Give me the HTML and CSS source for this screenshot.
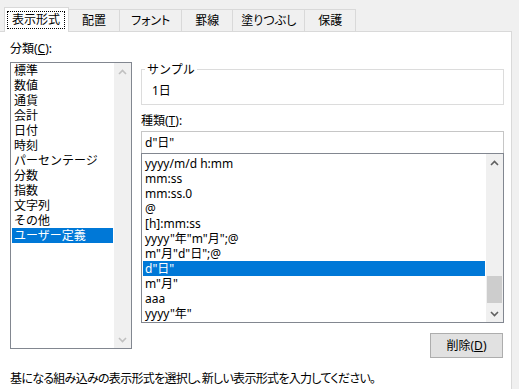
FILE: index.html
```html
<!DOCTYPE html>
<html lang="ja">
    <head>
        <meta charset="UTF-8">
        <title>セルの書式設定</title>
        <link rel="stylesheet" href="styles.css">
    </head>
    <body>
        <div class="tabs">
            <div class="tab active"><span class="focus">表示形式</span></div>
            <div class="tab">配置</div>
            <div class="tab tab-kana">フォント</div>
            <div class="tab">罫線</div>
            <div class="tab tab-long">塗りつぶし</div>
            <div class="tab">保護</div>
        </div>

        <div class="panel">
            <div class="col-left">
                <div class="label">分類(<u>C</u>):</div>
                <div class="listbox cat-list">
                    <ul class="items">
                        <li>標準</li>
                        <li>数値</li>
                        <li>通貨</li>
                        <li>会計</li>
                        <li>日付</li>
                        <li>時刻</li>
                        <li>パーセンテージ</li>
                        <li>分数</li>
                        <li>指数</li>
                        <li>文字列</li>
                        <li>その他</li>
                        <li class="selected">ユーザー定義</li>
                    </ul>
                    <div class="scrollbar disabled">
                        <div class="arrow"><svg width="9" height="6" viewBox="0 0 9 6"><polyline points="1,5 4.5,1.5 8,5" /></svg></div>
                        <div class="track"></div>
                        <div class="arrow"><svg width="9" height="6" viewBox="0 0 9 6"><polyline points="1,1 4.5,4.5 8,1" /></svg></div>
                    </div>
                </div>
            </div>

            <div class="col-right">
                <fieldset class="sample">
                    <legend>サンプル</legend>
                    <div class="sample-value">1日</div>
                </fieldset>
                <div class="label type-label">種類(<u>T</u>):</div>
                <div class="textbox">d"日"</div>
                <div class="listbox type-list">
                    <ul class="items">
                        <li>yyyy/m/d h:mm</li>
                        <li>mm:ss</li>
                        <li>mm:ss.0</li>
                        <li>@</li>
                        <li>[h]:mm:ss</li>
                        <li>yyyy"年"m"月";@</li>
                        <li>m"月"d"日";@</li>
                        <li class="selected">d"日"</li>
                        <li>m"月"</li>
                        <li>aaa</li>
                        <li>yyyy"年"</li>
                    </ul>
                    <div class="scrollbar">
                        <div class="arrow"><svg width="9" height="6" viewBox="0 0 9 6"><polyline points="1,5 4.5,1.5 8,5" /></svg></div>
                        <div class="track"><div class="thumb"></div></div>
                        <div class="arrow"><svg width="9" height="6" viewBox="0 0 9 6"><polyline points="1,1 4.5,4.5 8,1" /></svg></div>
                    </div>
                </div>
                <div class="btn-row">
                    <button class="btn">削除(<u>D</u>)</button>
                </div>
            </div>

            <p class="hint">基になる組み込みの表示形式を選択し、新しい表示形式を入力してください。</p>
        </div>
    </body>
</html>
```

FILE: styles.css
```css
body {
    margin: 0;
    background-color: #f0f0f0;
    font-family: "Noto Sans", "Noto Sans CJK JP", sans-serif;
    font-size: 12px;
    line-height: 15px;
    color: #000;
    overflow: hidden;
}

/* tab strip */
.tabs {
    display: flex;
    align-items: flex-end;
    height: 31px;
    padding-left: 4px;
}

.tab {
    box-sizing: border-box;
    height: 22px;
    padding: 0 13px;
    margin-left: -1px;
    border: 1px solid #d9d9d9;
    border-bottom: none;
    background-color: #f0f0f0;
    display: flex;
    align-items: center;
    justify-content: center;
    font-feature-settings: "palt";
}

.tab.tab-kana {
    padding: 0 11px;
}

.tab.tab-long {
    padding: 0 8px;
}

.tab.active {
    margin-left: 0;
    height: 25px;
    margin-bottom: -1px;
    padding: 0 3px 0 2px;
    background-color: #fff;
    position: relative;
    z-index: 1;
}

.focus {
    border: 1px dotted #000;
    padding: 1px 4px;
    line-height: 14px;
}

/* main page */
.panel {
    box-sizing: border-box;
    width: 512px;
    height: calc(100vh - 31px);
    overflow: hidden;
    background-color: #fff;
    border: 1px solid #d9d9d9;
    border-left: none;
    border-bottom: none;
    padding: 9px 0 0 10px;
    display: grid;
    grid-template-columns: 122px 363px;
    column-gap: 9px;
    align-content: start;
}

.label u,
.btn u {
    text-underline-offset: 1px;
}

.listbox {
    box-sizing: border-box;
    border: 1px solid #828790;
    display: flex;
    background-color: #fff;
}

.items {
    list-style: none;
    margin: 0;
    padding: 0 1px;
    flex: 1;
    overflow: hidden;
}

.items li {
    padding: 0 2px;
    height: 15px;
    white-space: nowrap;
}

.items li.selected {
    background-color: #0078d7;
    color: #fff;
}

.cat-list {
    margin-top: 6px;
    height: 287px;
}

.scrollbar {
    width: 17px;
    background-color: #f0f0f0;
    display: flex;
    flex-direction: column;
}

.arrow {
    height: 17px;
    display: flex;
    align-items: center;
    justify-content: center;
}

.arrow polyline {
    fill: none;
    stroke: #606060;
    stroke-width: 1.6;
}

.scrollbar.disabled .arrow polyline {
    stroke: #c0c0c0;
}

.track {
    flex: 1;
    position: relative;
}

.thumb {
    position: absolute;
    left: 1px;
    right: 1px;
    top: 105px;
    height: 27px;
    background-color: #cdcdcd;
}

/* right column */
.sample {
    margin: 21px 0 0;
    padding: 0 0 5px 10px;
    border: 1px solid #dcdcdc;
    height: 43px;
    box-sizing: border-box;
}

.sample legend {
    padding: 0 2px;
    margin-left: -7px;
    line-height: 15px;
}

.sample-value {
    margin-top: 6px;
}

.type-label {
    margin-top: 8px;
}

.textbox {
    box-sizing: border-box;
    margin-top: 3px;
    height: 22px;
    border: 1px solid #c6c6c6;
    border-bottom: none;
    padding: 3px 3px 0;
}

.type-list {
    height: 170px;
}

.type-list .items {
    padding-top: 2px;
}

.btn-row {
    display: flex;
    justify-content: flex-end;
    padding-right: 1px;
    margin-top: 10px;
}

.btn {
    width: 73px;
    height: 25px;
    font: inherit;
    background-color: #e1e1e1;
    border: 1px solid #adadad;
    color: #000;
    padding: 0;
}

.hint {
    grid-column: 1 / -1;
    margin: 13px 0 0;
    font-feature-settings: "palt";
    letter-spacing: -0.7px;
}
```
